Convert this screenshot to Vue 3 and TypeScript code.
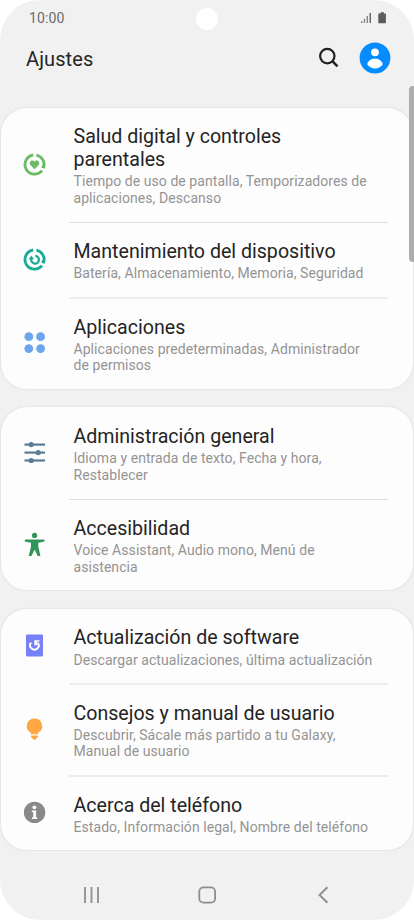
<script setup lang="ts">
type IconName = 'wellbeing' | 'care' | 'apps' | 'sliders' | 'person' | 'update' | 'bulb' | 'info'

interface Item {
  icon: IconName
  title: string
  lines: string[]
  soft?: boolean
}

const groups: Item[][] = [
  [
    { icon: 'wellbeing', title: 'Salud digital y controles\nparentales', lines: ['Tiempo de uso de pantalla, Temporizadores de', 'aplicaciones, Descanso'] },
    { icon: 'care', title: 'Mantenimiento del dispositivo', lines: ['Batería, Almacenamiento, Memoria, Seguridad'], soft: true },
    { icon: 'apps', title: 'Aplicaciones', lines: ['Aplicaciones predeterminadas, Administrador', 'de permisos'] },
  ],
  [
    { icon: 'sliders', title: 'Administración general', lines: ['Idioma y entrada de texto, Fecha y hora,', 'Restablecer'] },
    { icon: 'person', title: 'Accesibilidad', lines: ['Voice Assistant, Audio mono, Menú de', 'asistencia'] },
  ],
  [
    { icon: 'update', title: 'Actualización de software', lines: ['Descargar actualizaciones, última actualización'], soft: true },
    { icon: 'bulb', title: 'Consejos y manual de usuario', lines: ['Descubrir, Sácale más partido a tu Galaxy,', 'Manual de usuario'], soft: true },
    { icon: 'info', title: 'Acerca del teléfono', lines: ['Estado, Información legal, Nombre del teléfono'] },
  ],
]
</script>

<template>
  <div class="phone">
    <div class="camera"></div>
    <div class="statusbar">
      <span class="clock">10:00</span>
      <svg class="status-icons" width="28" height="14" viewBox="0 0 28 14">
        <g fill="#858585">
          <rect x="1" y="10" width="1.3" height="2" />
          <rect x="3.8" y="7.7" width="1.3" height="4.3" />
          <rect x="6.6" y="5" width="1.4" height="7" />
          <rect x="9.5" y="2" width="1.5" height="10" fill="#6a6a6a" />
        </g>
        <path d="M20.5 1.2h3.4v1.2h2V12.2h-7.6V2.4h2.2z" fill="#5c5c5c" />
      </svg>
    </div>
    <header class="header">
      <h1>Ajustes</h1>
      <svg class="search" width="22" height="22" viewBox="0 0 22 22" fill="none" stroke="#222">
        <circle cx="9.3" cy="9.1" r="7.2" stroke-width="2.2" />
        <path d="M14.4 14.2L19.5 19.3" stroke-width="2.5" />
      </svg>
      <svg class="avatar" width="32" height="32" viewBox="0 0 32 32">
        <circle cx="16" cy="16" r="15.4" fill="#058cff" />
        <circle cx="16" cy="10.3" r="3.9" fill="#fff" />
        <path d="M8.2 22.2c.8-3.5 3.8-5.5 7.8-5.5s7 2 7.8 5.5c-1.7 2.5-4.5 4.3-7.8 4.3s-6.1-1.8-7.8-4.3z" fill="#fff" />
      </svg>
    </header>

    <main class="groups">
      <section v-for="(group, g) in groups" :key="g" class="card">
        <div v-for="item in group" :key="item.title" class="row" :class="{ soft: item.soft }">
          <svg class="icon" width="25" height="25" viewBox="0 0 25 25">
            <g v-if="item.icon === 'wellbeing' || item.icon === 'care'" :class="item.icon">
              <g fill="none" stroke="currentColor" stroke-width="2.8">
                <path d="M11.2 3A9.6 9.6 0 1 0 20 18.6" />
                <path d="M14.4 3.1A9.6 9.6 0 0 1 21.8 15L19.8 14.4" />
              </g>
              <path v-if="item.icon === 'wellbeing'" fill="currentColor" d="M12.5 17.3L8.6 13.3C6.8 11.3 8 8.6 10.2 8.6c1 0 1.8.5 2.3 1.3c.5-.8 1.3-1.3 2.3-1.3c2.2 0 3.4 2.7 1.6 4.7z" />
              <g v-else>
                <path d="M13.3 8.8A3.9 3.9 0 1 1 9.2 12" fill="none" stroke="currentColor" stroke-width="2.2" />
                <path d="M6.4 12.3L9.4 8.8L12.3 12.3z" fill="currentColor" />
              </g>
            </g>
            <g v-else-if="item.icon === 'apps'" fill="#6ba5ec">
              <circle cx="6.8" cy="6.7" r="4.4" />
              <circle cx="18.6" cy="6.7" r="4.4" />
              <circle cx="6.8" cy="18.6" r="4.4" />
              <circle cx="18.6" cy="18.6" r="4.4" />
            </g>
            <g v-else-if="item.icon === 'sliders'" fill="#5b7c95">
              <rect x="2.5" y="3.5" width="20.5" height="2.2" />
              <rect x="2.5" y="11.5" width="20.5" height="2.2" />
              <rect x="2.5" y="19.4" width="20.5" height="2.2" />
              <circle cx="9.2" cy="4.6" r="2.6" />
              <circle cx="16.2" cy="12.6" r="2.6" />
              <circle cx="9.2" cy="20.5" r="2.6" />
            </g>
            <g v-else-if="item.icon === 'person'" fill="#2f9658">
              <circle cx="12.6" cy="3.4" r="2.6" />
              <path d="M4 7.6H21.3C23 7.6 23.1 9.5 21.7 9.8L16.3 10.8V14.5L18.4 24.1H15.7L12.6 17.6L9.5 24.1H6.7L9 14.5V10.8L3.6 9.8C2.2 9.5 2.3 7.6 4 7.6z" />
            </g>
            <g v-else-if="item.icon === 'update'">
              <rect x="4" y="1.4" width="17" height="22" rx="1.1" fill="#7782f8" />
              <path d="M9.1 9.6A4.3 4.3 0 1 0 15.9 9.8" fill="none" stroke="#fff" stroke-width="1.9" />
              <path d="M12.3 7.3H17.5V8.5H15.4V12.2H12.3z" fill="#fff" />
            </g>
            <g v-else-if="item.icon === 'bulb'" fill="#ffa742">
              <path d="M12.5 1.4A7.6 7.6 0 0 0 8.5 15.5Q9.1 16 9.1 17.2H15.9Q15.9 16 16.5 15.5A7.6 7.6 0 0 0 12.5 1.4z" />
              <path d="M9.1 18.4H15.9V20.1Q15.5 21 14.5 21.3Q14 22.8 12.5 22.8T10.5 21.3Q9.5 21 9.1 20.1z" />
            </g>
            <g v-else>
              <circle cx="12.6" cy="12.4" r="10.7" fill="#898989" />
              <circle cx="12.4" cy="7.3" r="1.9" fill="#fff" />
              <path d="M9.8 10.4H14.1V17.3H15.2V19H10V17.3H11.2V12H9.8z" fill="#fff" />
            </g>
          </svg>
          <div class="text">
            <h2>{{ item.title }}</h2>
            <p><span v-for="line in item.lines" :key="line">{{ line }}</span></p>
          </div>
        </div>
      </section>
    </main>

    <nav class="nav">
      <svg width="18" height="18" viewBox="0 0 18 18" stroke="#929292" stroke-width="1.9">
        <path d="M3 1v16M9.5 1v16M16 1v16" />
      </svg>
      <svg width="18" height="18" viewBox="0 0 18 18" fill="none" stroke="#8d8d8d" stroke-width="1.8">
        <rect x="1.3" y="1.3" width="15.8" height="15.4" rx="4.2" />
      </svg>
      <svg width="18" height="18" viewBox="0 0 18 18" fill="none" stroke="#8d8d8d" stroke-width="1.9">
        <path d="M13.4 1.3L5.5 9L13.4 16.7" />
      </svg>
    </nav>
    <div class="scrollbar"></div>
  </div>
</template>

<style>
body {
  margin: 0;
  background: #fff;
}
</style>

<style scoped>
.phone {
  position: relative;
  box-sizing: border-box;
  width: 414px;
  height: 920px;
  overflow: hidden;
  border-radius: 40px;
  background: #f1f1f1;
  font-family: Roboto, "Liberation Sans", sans-serif;
  display: flex;
  flex-direction: column;
}
.camera {
  position: absolute;
  left: 196px;
  top: 8px;
  width: 22px;
  height: 22px;
  border-radius: 50%;
  background: #fff;
}
.statusbar {
  height: 36px;
  padding: 0 26px 0 29px;
  display: flex;
  align-items: center;
  justify-content: space-between;
}
.clock {
  font-size: 14px;
  letter-spacing: 0.1px;
  color: #6c6c6c;
}
.header {
  height: 44px;
  margin-bottom: 27.5px;
  padding: 0 23px 0 26px;
  display: flex;
  align-items: center;
}
h1 {
  flex: 1;
  margin: 0;
  padding-top: 2px;
  font-size: 20px;
  letter-spacing: 0.1px;
  font-weight: 400;
  color: #252525;
}
.search {
  margin: 0 19px 0 0;
}
.groups {
  display: flex;
  flex-direction: column;
  gap: 18.3px;
}
.card {
  margin: 0 1px;
  border-radius: 26px;
  background: #fdfdfd;
  box-shadow: 0 0 1px 0.3px #e6e6e6;
}
.row {
  position: relative;
  display: flex;
  align-items: center;
  padding-left: 21px;
  gap: 26.5px;
}
.row:not(:last-child)::after {
  content: "";
  position: absolute;
  left: 68px;
  right: 25px;
  bottom: -0.5px;
  height: 1px;
  background: #dfdfdf;
}
.row.soft::after {
  bottom: -0.6px;
  height: 2px;
  background: #ededed;
}
.icon {
  flex: none;
  margin-bottom: 1px;
}
.wellbeing {
  color: #6bbb67;
}
.care {
  color: #1aaa98;
}
.text {
  padding: 17.6px 0 16px;
}
.row:last-child .text {
  padding-bottom: 15px;
}
h2 {
  margin: 0 0 2.4px;
  font-size: 19.6px;
  line-height: 23px;
  font-weight: 400;
  color: #242424;
  white-space: pre;
}
p {
  margin: 0;
  font-size: 14px;
  line-height: 16.5px;
  letter-spacing: 0.065px;
  color: #949494;
  white-space: nowrap;
}
p span {
  display: block;
}
.nav {
  flex: 1;
  padding: 19px 82px 0;
  display: flex;
  align-items: center;
  justify-content: space-between;
}
.scrollbar {
  position: absolute;
  right: 0;
  top: 86px;
  width: 5px;
  height: 176px;
  border-radius: 4px 0 0 4px;
  background: #adadad;
}
</style>
